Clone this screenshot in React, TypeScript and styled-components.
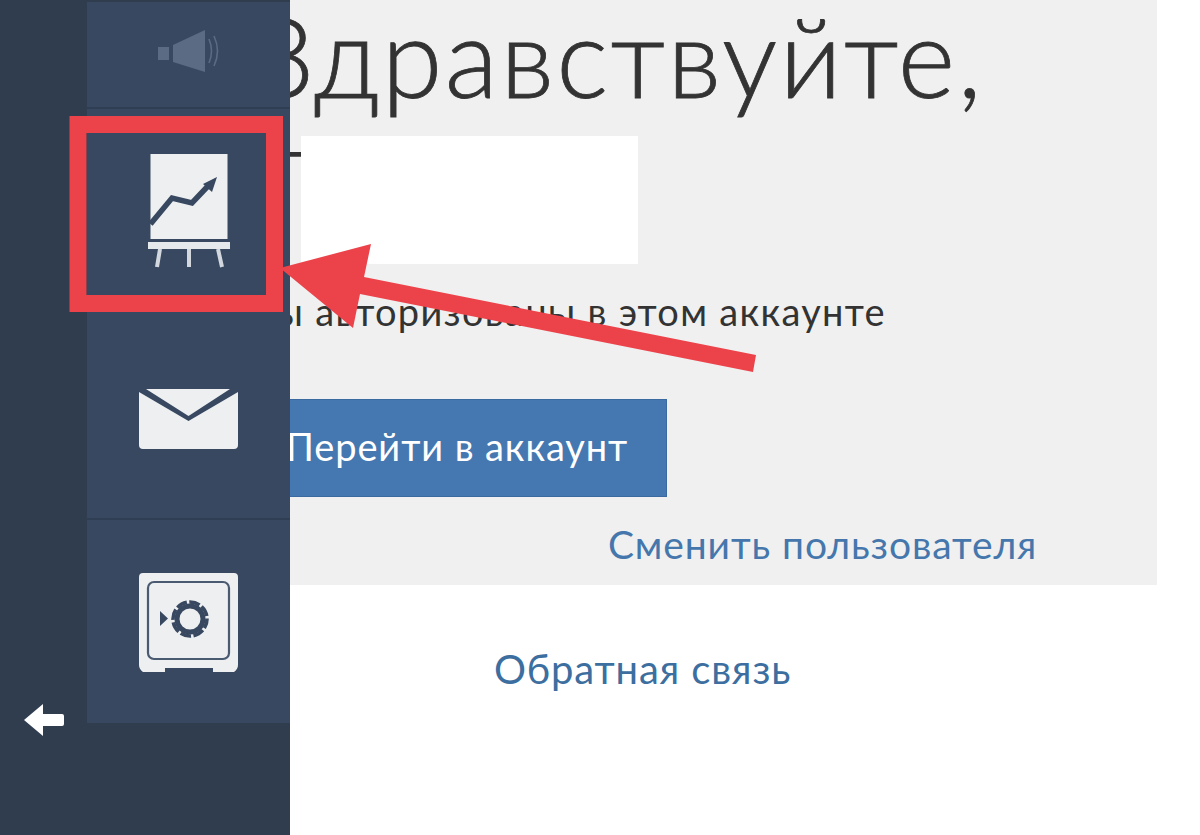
import React from "react";
import styled, { createGlobalStyle } from "styled-components";

const GlobalStyle = createGlobalStyle`
  html, body {
    margin: 0;
    padding: 0;
    background: #ffffff;
  }
  #root {
    height: 835px;
  }
`;

const Page = styled.div`
  position: relative;
  display: flex;
  width: 1200px;
  height: 835px;
  overflow: hidden;
  font-family: "Lato", "Noto Sans", sans-serif;
`;

const Sidebar = styled.aside`
  position: relative;
  z-index: 2;
  flex: none;
  display: flex;
  flex-direction: column;
  width: 203px;
  height: 835px;
  padding: 2px 0 0 87px;
  box-sizing: content-box;
  background: #303d4f;
`;

const BackButton = styled.div`
  position: absolute;
  left: 24px;
  top: 704px;
  line-height: 0;
`;

const MenuItem = styled.div<{ $height: number; $lift?: number; $drop?: number; $divider?: boolean }>`
  display: flex;
  align-items: center;
  justify-content: center;
  box-sizing: border-box;
  height: ${(p) => p.$height}px;
  padding-top: ${(p) => p.$drop ?? 0}px;
  padding-bottom: ${(p) => p.$lift ?? 0}px;
  background: #384860;
  border-bottom: ${(p) => (p.$divider ? "2px solid #2f3e52" : "none")};
`;

const Main = styled.main`
  flex: 1;
  margin-left: -20px;
  min-width: 0;
`;

const Panel = styled.section`
  box-sizing: border-box;
  width: 887px;
  height: 585px;
  background: #f0f0f0;
  overflow: hidden;
`;

const Greeting = styled.h1`
  margin: 0 0 0 -18px;
  height: 136px;
  font-size: 110px;
  line-height: 110px;
  letter-spacing: 2.3px;
  font-weight: 300;
  -webkit-text-stroke: 0.8px #333333;
  color: #333333;
  white-space: nowrap;
`;

const NameRow = styled.div`
  display: flex;
  height: 128px;
`;

const NameInitial = styled.span`
  width: 31px;
  padding-left: 10px;
  margin-right: -10px;
  font-size: 110px;
  line-height: 102px;
  font-weight: 300;
  color: #333333;
`;

const NameMask = styled.div`
  position: relative;
  width: 337px;
  height: 128px;
  background: #ffffff;
`;

const Notice = styled.p`
  margin: 26px 0 0 -20px;
  font-size: 38px;
  line-height: 42px;
  letter-spacing: 1.3px;
  color: #333333;
  white-space: nowrap;
`;

const AccountButton = styled.button`
  display: block;
  box-sizing: border-box;
  width: 397px;
  height: 98px;
  margin-top: 67px;
  padding: 0 0 5px 15px;
  border: 1px solid #3a6a9f;
  background: #4577b0;
  color: #ffffff;
  font-family: inherit;
  font-size: 38px;
  letter-spacing: 0.9px;
  text-align: left;
`;

const SwitchUser = styled.a`
  display: block;
  margin: 25px 0 0 338px;
  font-size: 39px;
  line-height: 44px;
  letter-spacing: 0.9px;
  color: #4577ac;
  white-space: nowrap;
`;

const Feedback = styled.a`
  display: block;
  margin: 62px 0 0 224px;
  font-size: 40px;
  line-height: 44px;
  letter-spacing: 0.85px;
  color: #3c6e9f;
  white-space: nowrap;
`;

const Annotation = styled.svg`
  position: absolute;
  left: 0;
  top: 0;
  z-index: 3;
  pointer-events: none;
`;

function SpeakerIcon() {
  return (
    <svg width="62" height="42" viewBox="0 0 62 42">
      <rect x="0" y="17" width="11" height="13" fill="#5a6b83" />
      <path d="M15 15 L47 0 V42 L15 32 Z" fill="#5a6b83" />
      <path d="M51 9 Q56 21 51 33 M56 6 Q63 21 56 36" fill="none" stroke="#5a6b83" strokeWidth="1.6" />
    </svg>
  );
}

function ChartIcon() {
  return (
    <svg width="82" height="114" viewBox="0 0 82 114">
      <rect x="2.5" y="0" width="77" height="85" fill="#edeff1" />
      <path d="M2.5 70 L24 44 L44 49 L60 32" fill="none" stroke="#384860" strokeWidth="5.5" />
      <path d="M55 30 L69 23 L64 38 Z" fill="#384860" />
      <rect x="0" y="88" width="82" height="7" fill="#e6e9ec" />
      <path d="M12 95 L9 113 M41 95 V113 M70 95 L74 113" stroke="#d3d8de" strokeWidth="4" />
    </svg>
  );
}

function MailIcon() {
  return (
    <svg width="99" height="60" viewBox="0 0 99 60">
      <path
        d="M7 0 H91 L49.5 27 Z M0 3 L49.5 32 L99 3 V56 Q99 60 95 60 H4 Q0 60 0 56 Z"
        fill="#edeff1"
      />
    </svg>
  );
}

function SafeIcon() {
  return (
    <svg width="99" height="99" viewBox="0 0 99 99">
      <path
        d="M4 0 H95 Q99 0 99 4 V92 Q99 96 95 99 H74 V95 H26 V99 H4 Q0 96 0 92 V4 Q0 0 4 0 Z"
        fill="#edeff1"
      />
      <rect x="9" y="9" width="81" height="77" rx="6" fill="none" stroke="#4a5a70" strokeWidth="2.2" />
      <path d="M21 38 L29 45.5 L21 53 Z" fill="#384860" />
      <circle cx="51" cy="46" r="13" fill="none" stroke="#384860" strokeWidth="5" />
      <circle
        cx="51"
        cy="46"
        r="17"
        fill="none"
        stroke="#384860"
        strokeWidth="3.6"
        strokeDasharray="10.85 2.5"
        strokeDashoffset="1.25"
      />
    </svg>
  );
}

function BackArrow() {
  return (
    <svg width="41" height="32" viewBox="0 0 41 32">
      <path d="M0 16 L19 0 V10 H38 Q40 10 40 12 V20 Q40 22 38 22 H19 V32 Z" fill="#ffffff" />
    </svg>
  );
}

export default function App() {
  return (
    <Page>
      <GlobalStyle />
      <Sidebar>
        <MenuItem $height={107} $divider $lift={8}>
          <SpeakerIcon />
        </MenuItem>
        <MenuItem $height={212} $lift={8}>
          <ChartIcon />
        </MenuItem>
        <MenuItem $height={199} $divider $lift={2}>
          <MailIcon />
        </MenuItem>
        <MenuItem $height={203} $drop={2}>
          <SafeIcon />
        </MenuItem>
        <BackButton>
          <BackArrow />
        </BackButton>
      </Sidebar>
      <Main>
        <Panel>
          <Greeting>Здравствуйте,</Greeting>
          <NameRow>
            <NameInitial>Т</NameInitial>
            <NameMask />
          </NameRow>
          <Notice>Вы авторизованы в этом аккаунте</Notice>
          <AccountButton>Перейти в аккаунт</AccountButton>
          <SwitchUser>Сменить пользователя</SwitchUser>
        </Panel>
        <Feedback>Обратная связь</Feedback>
      </Main>
      <Annotation width="1200" height="835" viewBox="0 0 1200 835">
        <rect x="78" y="124.5" width="196.5" height="179" fill="none" stroke="#ec434b" strokeWidth="17" />
        <path d="M280 268 L371 244 L364 277 L756 355 L753 372 L360 294 L353 328 Z" fill="#ec434b" />
      </Annotation>
    </Page>
  );
}
